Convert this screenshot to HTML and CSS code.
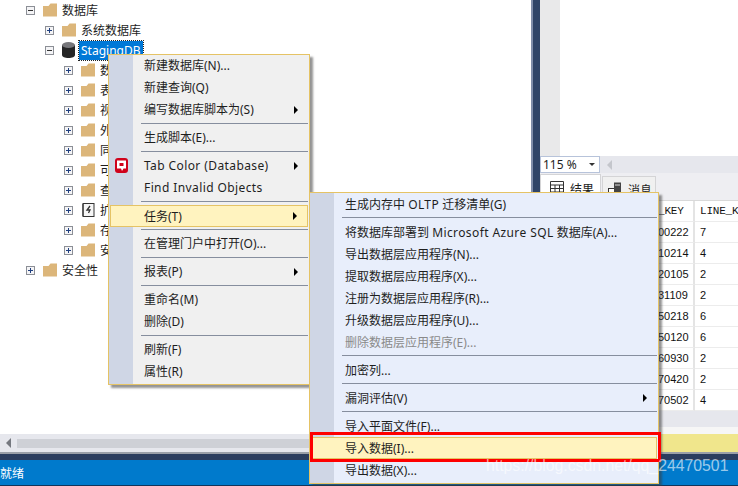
FILE: index.html
```html
<!DOCTYPE html>
<html lang="zh-CN">
<head>
<meta charset="utf-8">
<title>SSMS</title>
<link rel="stylesheet" href="styles.css">
</head>
<body>
<svg class="defs" width="0" height="0" aria-hidden="true">
  <symbol id="folder" viewBox="0 0 14 13"><path d="M0 2.500V13h14V0H7.500L5.500 2.500z" fill="#dcb67a"/></symbol>
  <symbol id="plus" viewBox="0 0 9 9"><rect x=".5" y=".5" width="8" height="8" fill="#f4f4f6" stroke="#8c8f96"/><path d="M2 4.500h5M4.500 2v5" stroke="#1f3f7f"/></symbol>
  <symbol id="minus" viewBox="0 0 9 9"><rect x=".5" y=".5" width="8" height="8" fill="#f4f4f6" stroke="#8c8f96"/><path d="M2 4.500h5" stroke="#333"/></symbol>
</svg>
<div class="app">
  <div class="main">
    <div class="left">
      <div class="tree">
        <div class="row l0"><svg class="exp"><use href="#minus"/></svg><svg class="fld"><use href="#folder"/></svg><span class="lbl">数据库</span></div>
        <div class="row l1"><svg class="exp"><use href="#plus"/></svg><svg class="fld"><use href="#folder"/></svg><span class="lbl">系统数据库</span></div>
        <div class="row l1"><svg class="exp"><use href="#minus"/></svg>
          <svg class="fld db" viewBox="0 0 13 16"><path d="M0 3v10c0 1.700 2.900 3 6.500 3s6.500-1.300 6.500-3V3z" fill="#252526"/><ellipse cx="6.500" cy="3" rx="6.500" ry="3" fill="#77777b"/></svg>
          <span class="lbl sel">StagingDB</span></div>
        <div class="row l2"><svg class="exp"><use href="#plus"/></svg><svg class="fld"><use href="#folder"/></svg><span class="lbl">数据库关系图</span></div>
        <div class="row l2"><svg class="exp"><use href="#plus"/></svg><svg class="fld"><use href="#folder"/></svg><span class="lbl">表</span></div>
        <div class="row l2"><svg class="exp"><use href="#plus"/></svg><svg class="fld"><use href="#folder"/></svg><span class="lbl">视图</span></div>
        <div class="row l2"><svg class="exp"><use href="#plus"/></svg><svg class="fld"><use href="#folder"/></svg><span class="lbl">外部资源</span></div>
        <div class="row l2"><svg class="exp"><use href="#plus"/></svg><svg class="fld"><use href="#folder"/></svg><span class="lbl">同义词</span></div>
        <div class="row l2"><svg class="exp"><use href="#plus"/></svg><svg class="fld"><use href="#folder"/></svg><span class="lbl">可编程性</span></div>
        <div class="row l2"><svg class="exp"><use href="#plus"/></svg><svg class="fld"><use href="#folder"/></svg><span class="lbl">查询存储</span></div>
        <div class="row l2"><svg class="exp"><use href="#plus"/></svg>
          <svg class="fld" viewBox="0 0 14 14"><rect x="2" y="0.500" width="11" height="13" fill="#f6f6f6" stroke="#333"/><path d="M1 2h2M1 4h2M1 6h2M1 8h2M1 10h2M1 12h2" stroke="#222"/><path d="M9 3 6 7h3L7.500 10" fill="none" stroke="#333" stroke-width="1.300"/></svg>
          <span class="lbl">扩展事件</span></div>
        <div class="row l2"><svg class="exp"><use href="#plus"/></svg><svg class="fld"><use href="#folder"/></svg><span class="lbl">存储</span></div>
        <div class="row l2"><svg class="exp"><use href="#plus"/></svg><svg class="fld"><use href="#folder"/></svg><span class="lbl">安全性</span></div>
        <div class="row l0"><svg class="exp"><use href="#plus"/></svg><svg class="fld"><use href="#folder"/></svg><span class="lbl">安全性</span></div>
      </div>
      <div class="hscroll"><span class="arrow-l"></span><span class="thumb"></span></div>
    </div>
    <div class="splitter"></div>
    <div class="right">
      <div class="editor"><div class="margin"></div></div>
      <div class="zoomrow">
        <div class="combo"><span>115 %</span><span class="caret"></span></div>
        <span class="arrow-l pale"></span>
      </div>
      <div class="tabs">
        <div class="tab active">
          <svg class="tabicon" viewBox="0 0 14 14"><path d="M.5.500h13v13H.5zM.5 4h13M.5 7.500h13M.5 11h13M5 4v10M9.500 4v10" fill="none" stroke="#333"/></svg>
          <span>结果</span></div>
        <div class="tab">
          <svg class="tabicon" viewBox="0 0 14 14"><rect x=".5" y="6.500" width="8" height="7" fill="#fff" stroke="#333"/><rect x="6" y=".5" width="7" height="13" fill="#444"/><path d="M7 3h5" stroke="#ddd"/></svg>
          <span>消息</span></div>
      </div>
      <div class="grid">
        <div class="hd c1">_KEY</div><div class="hd">LINE_K</div>
        <div class="c1">00222</div><div>7</div>
        <div class="c1">10214</div><div>4</div>
        <div class="c1">20105</div><div>2</div>
        <div class="c1">31109</div><div>2</div>
        <div class="c1">50218</div><div>6</div>
        <div class="c1">50120</div><div>6</div>
        <div class="c1">60930</div><div>2</div>
        <div class="c1">70420</div><div>2</div>
        <div class="c1">70502</div><div>4</div>
      </div>
      <div class="gridfoot"></div>
      <div class="gap"></div>
      <div class="querybar"></div>
    </div>
  </div>
  <div class="rule"></div>
  <div class="navy"></div>
  <div class="status"><span>就绪</span></div>

  <div class="menu menu1">
    <div class="gutter"></div>
    <div class="item">新建数据库(N)...</div>
    <div class="item">新建查询(Q)</div>
    <div class="item sub">编写数据库脚本为(S)</div>
    <div class="sep"></div>
    <div class="item">生成脚本(E)...</div>
    <div class="sep"></div>
    <div class="item sub">
      <svg class="prompt" viewBox="0 0 13 15"><rect width="13" height="15" rx="3" fill="#d0021b"/><path d="M2 2.500h9v8H8.500L7 13 6 10.500H2z" fill="#fff"/><rect x="4.500" y="5" width="4" height="3" fill="#d0021b"/></svg>
      <span class="lat">Tab Color (Database)</span></div>
    <div class="item"><span class="lat">Find Invalid Objects</span></div>
    <div class="sep"></div>
    <div class="item sub hot">任务(T)</div>
    <div class="sep"></div>
    <div class="item">在管理门户中打开(O)...</div>
    <div class="sep"></div>
    <div class="item sub">报表(P)</div>
    <div class="sep"></div>
    <div class="item">重命名(M)</div>
    <div class="item">删除(D)</div>
    <div class="sep"></div>
    <div class="item">刷新(F)</div>
    <div class="item">属性(R)</div>
  </div>

  <div class="menu menu2">
    <div class="gutter"></div>
    <div class="item">生成内存中 <span class="lat">OLTP</span> 迁移清单(G)</div>
    <div class="sep"></div>
    <div class="item">将数据库部署到 <span class="lat">Microsoft Azure SQL</span> 数据库(A)...</div>
    <div class="item">导出数据层应用程序(N)...</div>
    <div class="item">提取数据层应用程序(X)...</div>
    <div class="item">注册为数据层应用程序(R)...</div>
    <div class="item">升级数据层应用程序(U)...</div>
    <div class="item off">删除数据层应用程序(E)...</div>
    <div class="sep"></div>
    <div class="item">加密列...</div>
    <div class="sep"></div>
    <div class="item sub">漏洞评估(V)</div>
    <div class="sep"></div>
    <div class="item">导入平面文件(F)...</div>
    <div class="item hot">导入数据(I)...</div>
    <div class="item">导出数据(X)...</div>
  </div>

  <div class="redbox"></div>
  <div class="watermark">https://blog.csdn.net/qq_24470501</div>
</div>
</body>
</html>
```
FILE: styles.css
```css
* { box-sizing: border-box; }
html, body { margin: 0; padding: 0; }
body { font-family: "Noto Sans", "Noto Sans CJK SC", sans-serif; font-size: 12px; color: #1e1e1e; background: #fff; }
.defs { position: absolute; }
.app { position: relative; width: 738px; height: 486px; overflow: hidden; display: flex; flex-direction: column; }

.main { height: 452px; display: flex; flex: none; }
.left { width: 531px; display: flex; flex-direction: column; }
.tree { flex: 1; overflow: hidden; }
.row { height: 20px; display: flex; align-items: center; white-space: nowrap; }
.l0 { padding-left: 26px; }
.l1 { padding-left: 45px; }
.l2 { padding-left: 64px; }
.exp { width: 9px; height: 9px; margin-right: 8px; flex: none; }
.fld { width: 14px; height: 14px; margin-right: 4px; flex: none; }
.db { width: 13px; height: 16px; margin-right: 5px; }
.lbl { padding: 1px 1px 0; line-height: 18px; font-size: 12px; }
.sel { background: #0078d7; color: #fff; outline: 1px dotted #222; margin-left: -1px; padding: 1px 2px 0; }

.hscroll { height: 18px; background: #e6e7ed; display: flex; align-items: center; padding-left: 6px; gap: 6px; }
.arrow-l { width: 0; height: 0; border-style: solid; border-width: 5px 5px 5px 0; border-color: transparent #75787f transparent transparent; flex: none; }
.arrow-l.pale { border-right-color: #c4c6cc; margin-left: 7px; }
.thumb { flex: 1; height: 9px; background: #ced0d6; }

.splitter { width: 9px; flex: none; background: #2f4468; border-left: 2px solid #7f8daa; }
.right { flex: 1; display: flex; flex-direction: column; min-width: 0; }
.editor { height: 156px; flex: none; background: #fff; }
.margin { width: 20px; height: 100%; background: #e9e9ea; }
.zoomrow { height: 17px; flex: none; background: #e6e7ed; display: flex; align-items: center; }
.combo { width: 60px; height: 17px; background: #fff; border: 1px solid #b7c3da; display: flex; align-items: center; justify-content: space-between; padding: 0 4px 0 2px; font-size: 12px; }
.caret { width: 0; height: 0; border-style: solid; border-width: 3px 3px 0; border-color: #333 transparent transparent; }
.tabs { height: 27px; flex: none; background: #eeeef2; display: flex; align-items: flex-end; gap: 1px; }
.tab { height: 24px; width: 54px; display: flex; gap: 6px; align-items: flex-start; padding: 4px 0 0 5px; background: #f0f0f0; border: 1px solid #d4d4d6; border-bottom: 0; }
.tab.active { width: 61px; height: 26px; background: #fff; padding-left: 9px; padding-top: 5px; }
.tabicon { width: 14px; height: 14px; margin-top: 1px; flex: none; }

.grid { display: grid; grid-template-columns: 155px 1fr; grid-auto-rows: 21px; background: #fff; flex: none; font-family: "Liberation Sans", sans-serif; font-size: 11px; line-height: 21px; color: #111; border-top: 1px solid #d9d9d9; }
.grid > div { padding-left: 5px; border-bottom: 1px solid #ececec; white-space: nowrap; overflow: hidden; }
.grid > .c1 { padding-left: 118px; border-right: 2px solid #e4e4e4; }
.grid > .hd { font-family: "Liberation Mono", monospace; letter-spacing: -.2px; background: #fff; }
.gridfoot { height: 16px; flex: none; background: #e6e7ed; }
.gap { height: 7px; flex: none; background: #f6f6f6; }
.querybar { flex: 1; background: #f0e68c; }

.rule { height: 2px; flex: none; background: #9a9fa8; }
.navy { height: 6px; flex: none; background: #2b3d5e; }
.status { flex: 1; background: #007acc; color: #fff; display: flex; align-items: center; border-bottom: 1px solid #12355b; }

.menu { position: absolute; border: 1px solid #e5c365; display: flex; flex-direction: column; white-space: nowrap; box-shadow: 3px 3px 2px rgba(60,60,60,.55); font-size: 12px; }
.gutter { position: absolute; left: 0; top: 0; bottom: 0; width: 24px; background: #cfd6e5; }
.menu1 { left: 108px; top: 54px; width: 202px; height: 331px; background: #f0f0f0; }
.menu2 { left: 309px; top: 192px; width: 350px; height: 292px; background: #e8eefb; }
.item { position: relative; height: 22px; line-height: 21px; padding: 1px 0 0 35px; flex: none; color: #1e1e1e; }
.menu1 .item { padding-top: 0; }
.lat { letter-spacing: .4px; }
.sub::after { content: ""; position: absolute; right: 11px; top: 7px; border-style: solid; border-width: 4px 0 4px 4px; border-color: transparent transparent transparent #000; }
.off { color: #8a8a8a; }
.item.hot { background: #fff3bf; border: 1px solid #e5c365; margin: 0 1px; padding: 1px 0 0 33px; line-height: 19px; }
.hot::after { top: 6px; right: 10px; }
.sep { height: 6px; flex: none; position: relative; }
.sep::after { content: ""; position: absolute; left: 32px; right: 1px; top: 2px; height: 1px; background: #868e9e; }
.prompt { position: absolute; left: 6px; top: 3px; width: 13px; height: 15px; }

.redbox { position: absolute; left: 310px; top: 432px; width: 351px; height: 30px; border: 3px solid #fe0000; }
.watermark { position: absolute; left: 486px; top: 455px; font-family: "Liberation Sans", sans-serif; font-size: 15.800px; line-height: 22px; color: rgba(255,255,255,.62); white-space: nowrap; }
```
